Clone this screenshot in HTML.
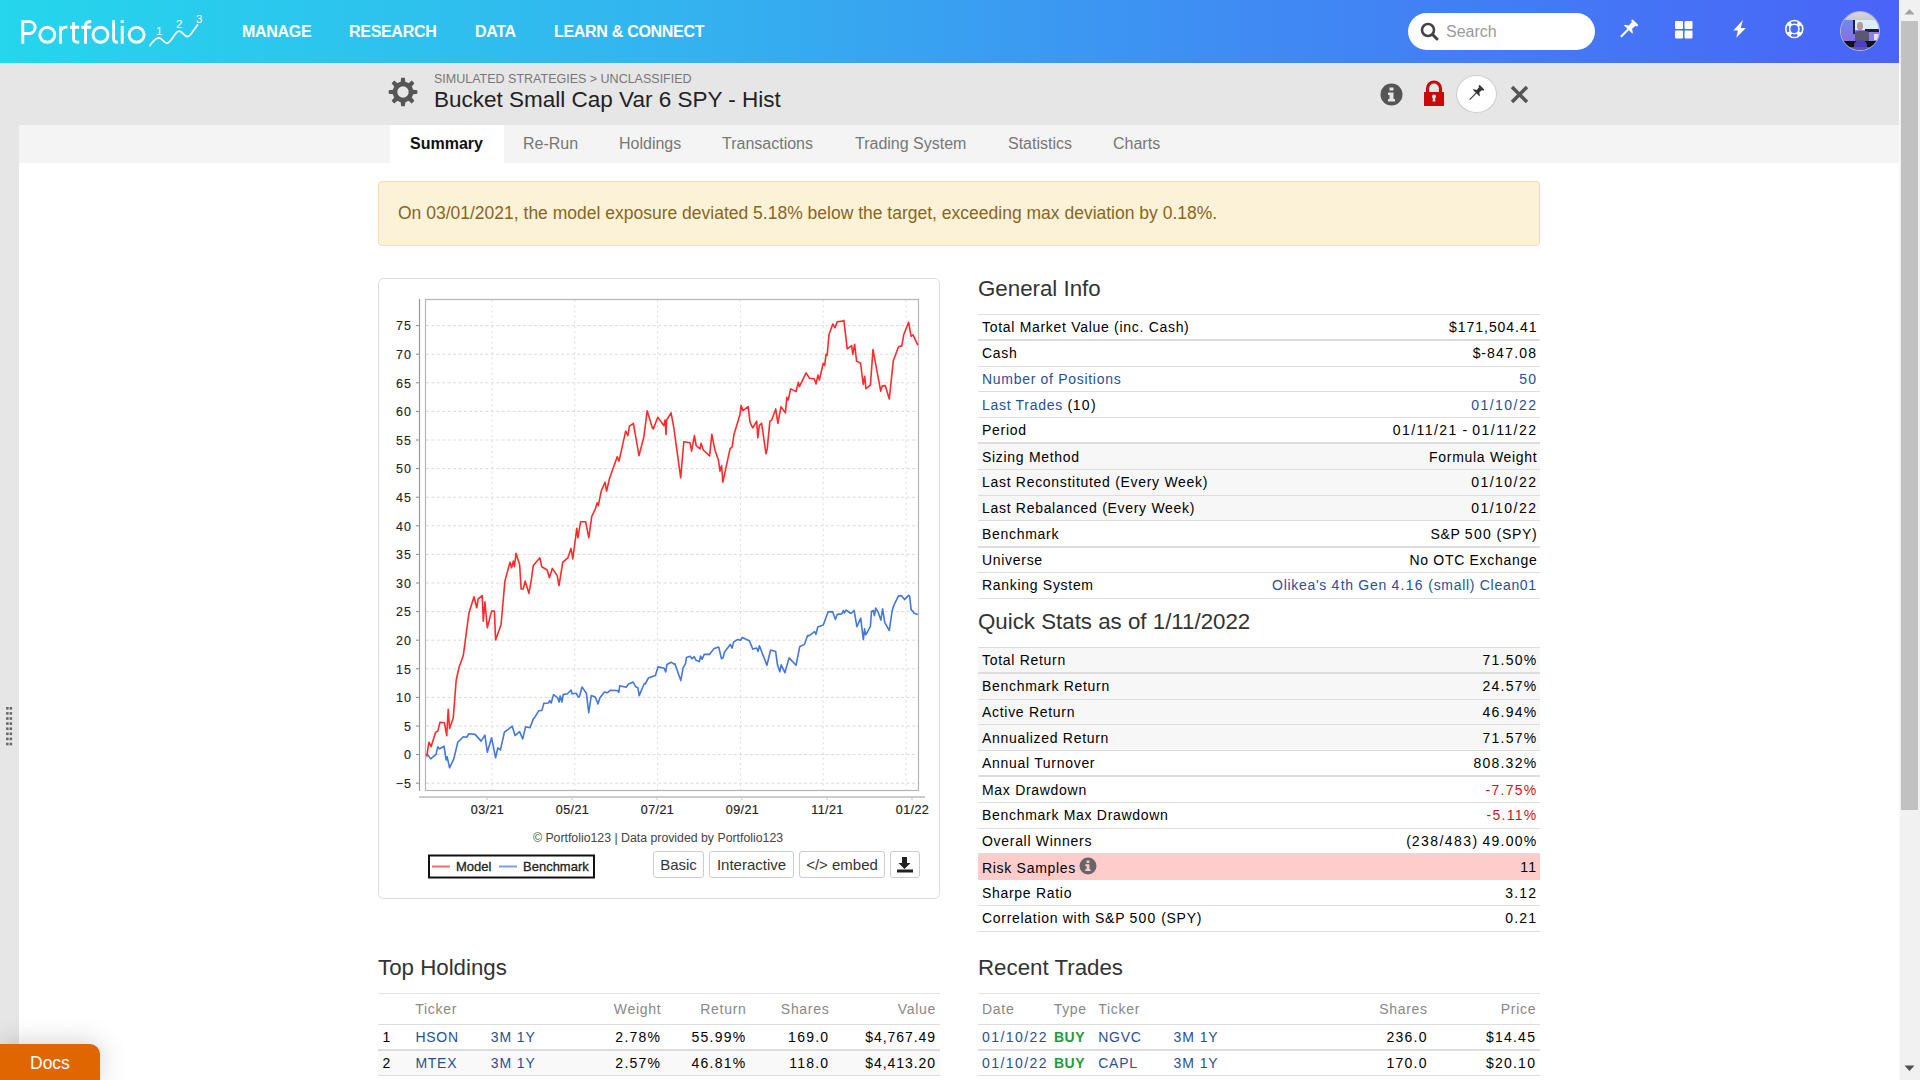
<!DOCTYPE html><html><head><meta charset="utf-8"><style>
*{box-sizing:border-box;margin:0;padding:0}
html,body{width:1920px;height:1080px;overflow:hidden}
body{background:#e6e6e6;font-family:"Liberation Sans",sans-serif;position:relative}
.a{position:absolute}
#nav{left:0;top:0;width:1899px;height:63px;background:linear-gradient(90deg,#25d6ec 0%,#33b4ef 35%,#3f8cf3 65%,#4964f8 100%)}
.navt{color:#fff;font-weight:700;font-size:16px;top:22px;line-height:20px;letter-spacing:-0.3px}
#search{left:1408px;top:13px;width:187px;height:37px;background:#fff;border-radius:19px}
#search span{position:absolute;left:38px;top:9px;font-size:16px;color:#9a9a9a;line-height:20px}
#content{left:19px;top:163px;width:1880px;height:917px;background:#fff}
#tabbar{left:19px;top:125px;width:1880px;height:38px;background:#f4f4f4}
.tab{top:134px;font-size:16px;color:#777;line-height:20px}
#alert{left:378px;top:181px;width:1162px;height:65px;background:#fcf2d8;border:1px solid #f6dcb0;border-radius:4px}
#alert span{position:absolute;left:19px;top:20px;font-size:17.5px;color:#88661e;line-height:22px}
.h2{font-size:22.3px;color:#333;line-height:26px}
table{border-collapse:collapse;position:absolute;font-size:14px;letter-spacing:0.7px;color:#000}
.tx{position:absolute;font-size:14px;letter-spacing:0.7px;line-height:16px;color:#000;white-space:nowrap}
.tr{text-align:right}
.n{letter-spacing:1.25px}
.d{letter-spacing:1.45px}
.m{letter-spacing:0.95px}
td{height:25.8px;padding:0 2.6px 0 4px;border-top:1px solid #ddd;white-space:nowrap;vertical-align:middle}
td.r{text-align:right}
tr.t td{border-top:2px solid #ddd}
tr.g td{background:#f7f7f7}
.lk{color:#2a4f95}
.neg{color:#c81818}
.btn{position:absolute;top:851px;height:27px;border:1px solid #ccc;border-radius:3px;background:#fff;font-size:15px;color:#333;line-height:25px;text-align:center}
#scroll{left:1899px;top:0;width:21px;height:1080px;background:#f1f1f1;border-left:1px solid #fafafa}
</style></head><body>
<div class="a" id="content"></div>
<div class="a" id="tabbar"></div>
<div class="a" id="nav">
<svg class="a" style="left:0;top:0" width="230" height="63" viewBox="0 0 230 63"><g stroke="#fff" stroke-width="2.9" fill="none"><path d="M22.8,43.7 V21.6 H29.2 A5.95,5.95 0 0 1 29.2,33.5 H22.8"/><circle cx="47.3" cy="34.8" r="7.5"/><path d="M60.4,43.7 V26.2 M60.4,33 C60.4,28.5 63,26.9 67.5,26.9"/><path d="M73.5,22.2 V39 C73.5,41.5 75,42.3 79.2,42.3 M70,27.3 H79.2"/><path d="M85.5,43.7 V26 C85.5,22.5 87.5,21.5 91.2,21.5 M81.4,27.3 H91.2"/><circle cx="100.5" cy="34.8" r="7.5"/><path d="M113.6,20.2 V39 C113.6,41.5 115,42.3 117.8,42.3"/><path d="M122.2,25.9 V43.7"/><circle cx="136.6" cy="34.8" r="7.5"/></g><rect x="120.75" y="20.2" width="2.9" height="2.8" fill="#fff"/><path d="M150,45.5 C153,41 156,37.8 159,37.8 C162,37.8 164,43.3 167,43.3 C171,43.3 175,31.2 179,31.2 C182.5,31.2 184.5,36.7 187.5,36.7 C190.5,36.7 194,29 197.5,25" stroke="#fff" stroke-width="1.7" fill="none" stroke-linecap="round"/><text x="156" y="34.5" font-family="Liberation Sans" font-size="11.5" fill="#fff">1</text><text x="176" y="28" font-family="Liberation Sans" font-size="11.5" fill="#fff">2</text><text x="196" y="22.5" font-family="Liberation Sans" font-size="11.5" fill="#fff">3</text></svg>
<div class="a navt" style="left:242px">MANAGE</div>
<div class="a navt" style="left:349px">RESEARCH</div>
<div class="a navt" style="left:475px">DATA</div>
<div class="a navt" style="left:554px">LEARN &amp; CONNECT</div>
<div class="a" id="search"><svg class="a" style="left:12px;top:9px" width="20" height="20" viewBox="0 0 20 20"><circle cx="8" cy="8" r="6" stroke="#444" stroke-width="2.6" fill="none"/><path d="M12.5,12.5 L17,17" stroke="#444" stroke-width="3" stroke-linecap="round"/></svg><span>Search</span></div>
<svg class="a" style="left:1614px;top:14px" width="40" height="30" viewBox="0 0 40 30"><g transform="translate(21.4,8.2) rotate(45)" fill="#fff"><rect x="-4.2" y="0" width="8.4" height="2.2" rx="0.8"/><path d="M-2.7,2 H2.7 L2.3,7 L5.8,9.4 V10.3 H-5.8 V9.4 L-2.3,7 Z"/><rect x="-1" y="10" width="2" height="10.5"/></g></svg>
<svg class="a" style="left:1674px;top:20px" width="20" height="20" viewBox="0 0 20 20"><rect x="1" y="1" width="8" height="8" rx="1" fill="#fff"/><rect x="10.5" y="1" width="8" height="8" rx="1" fill="#fff"/><rect x="1" y="10.5" width="8" height="8" rx="1" fill="#fff"/><rect x="10.5" y="10.5" width="8" height="8" rx="1" fill="#fff"/></svg>
<svg class="a" style="left:1724px;top:14px" width="30" height="30" viewBox="0 0 30 30"><path d="M18.9,6 L9.3,16.5 L13.9,16.5 L12.3,23.8 L21.9,13.9 L16.7,13.9 Z" fill="#fff"/></svg>
<svg class="a" style="left:1784px;top:19px" width="21" height="21" viewBox="0 0 21 21"><mask id="lbm"><rect width="21" height="21" fill="#000"/><circle cx="10.3" cy="10" r="9.3" fill="#fff"/><circle cx="10.3" cy="10" r="3.9" fill="#000"/><path d="M7.30,4.12 A6.6,6.6 0 0 1 13.30,4.12 M16.18,7.00 A6.6,6.6 0 0 1 16.18,13.00 M13.30,15.88 A6.6,6.6 0 0 1 7.30,15.88 M4.42,13.00 A6.6,6.6 0 0 1 4.42,7.00" stroke="#000" stroke-width="2.3" fill="none"/></mask><rect width="21" height="21" fill="#fff" mask="url(#lbm)"/></svg>
<div class="a" style="left:1840px;top:11px;width:40px;height:40px;border-radius:50%;overflow:hidden;border:1px solid #b8b8c0;background:#7d78ea"><div class="a" style="left:0;top:0;width:40px;height:8px;background:linear-gradient(180deg,#d8d8e0,#c8c8d0)"></div><div class="a" style="left:0;top:8px;width:13px;height:22px;background:linear-gradient(180deg,#7088f0,#8a6ee0)"></div><div class="a" style="left:14px;top:8px;width:26px;height:10px;background:#dcedf6"></div><div class="a" style="left:24px;top:17px;width:16px;height:3px;background:#1c1c3a"></div><div class="a" style="left:24px;top:20px;width:16px;height:12px;background:#8c80e2"></div><div class="a" style="left:33px;top:22px;width:5px;height:6px;background:#e8e0f0"></div><div class="a" style="left:12px;top:8px;width:2px;height:14px;background:#1a2050"></div><div class="a" style="left:14px;top:19px;width:14px;height:12px;background:#5a5870;border-radius:3px 3px 0 0"></div><div class="a" style="left:16px;top:10px;width:6px;height:8px;background:#b89a90;border-radius:45%"></div><div class="a" style="left:0;top:29px;width:40px;height:6px;background:#101018"></div><div class="a" style="left:13px;top:28px;width:13px;height:10px;background:#4a40c0;border-radius:50% 50% 0 0"></div><div class="a" style="left:0;top:35px;width:40px;height:5px;background:#6050c0"></div></div>
</div>
<svg class="a" style="left:382px;top:72px" width="42" height="40" viewBox="0 0 42 40"><mask id="gm"><rect width="42" height="40" fill="#000"/><circle cx="21.0" cy="20.0" r="10.4" fill="#fff"/><polygon points="29.50,22.60 35.30,21.80 35.30,18.20 29.50,17.40" fill="#fff"/><polygon points="25.17,27.85 29.84,31.38 32.38,28.84 28.85,24.17" fill="#fff"/><polygon points="18.40,28.50 19.20,34.30 22.80,34.30 23.60,28.50" fill="#fff"/><polygon points="13.15,24.17 9.62,28.84 12.16,31.38 16.83,27.85" fill="#fff"/><polygon points="12.50,17.40 6.70,18.20 6.70,21.80 12.50,22.60" fill="#fff"/><polygon points="16.83,12.15 12.16,8.62 9.62,11.16 13.15,15.83" fill="#fff"/><polygon points="23.60,11.50 22.80,5.70 19.20,5.70 18.40,11.50" fill="#fff"/><polygon points="28.85,15.83 32.38,11.16 29.84,8.62 25.17,12.15" fill="#fff"/><circle cx="21.0" cy="20.0" r="5.7" fill="#000"/></mask><rect width="42" height="40" fill="#555" mask="url(#gm)"/></svg>
<div class="a" style="left:434px;top:72px;font-size:12.5px;color:#777;line-height:14px">SIMULATED STRATEGIES &gt; UNCLASSIFIED</div>
<div class="a" style="left:434px;top:87px;font-size:22.5px;color:#222;line-height:26px">Bucket Small Cap Var 6 SPY - Hist</div>
<svg class="a" style="left:1380px;top:83px" width="24" height="24" viewBox="0 0 24 24"><circle cx="11.5" cy="11.5" r="11" fill="#555"/><rect x="9.5" y="4.5" width="4" height="3" fill="#e6e6e6"/><path d="M8,9.5 H13.5 V16 H15 V18.5 H8 V16 H9.5 V12 H8 Z" fill="#e6e6e6"/></svg>
<svg class="a" style="left:1423px;top:80px" width="22" height="27" viewBox="0 0 22 27"><path d="M4.5,12.5 V8.5 A6.5,6.5 0 0 1 17.5,8.5 V12.5" stroke="#c80a0a" stroke-width="3.2" fill="none"/><rect x="1" y="12" width="20" height="14" fill="#c80a0a"/><circle cx="11" cy="16.6" r="2" fill="#e6e6e6"/><path d="M10,17 H12 L12.4,21.5 H9.6 Z" fill="#e6e6e6"/></svg>
<div class="a" style="left:1456px;top:75px;width:41px;height:38px;border-radius:50%;background:#fff;border:1px solid #ccc"></div>
<svg class="a" style="left:1456px;top:75px" width="41" height="38" viewBox="0 0 41 38"><g transform="translate(26.0,12.2) rotate(45)" fill="#333"><rect x="-3.4" y="0" width="6.8" height="1.8" rx="0.6"/><path d="M-2.1,1.6 H2.1 L1.8,5.6 L4.6,7.6 V8.3 H-4.6 V7.6 L-1.8,5.6 Z"/><rect x="-0.55" y="8" width="1.1" height="9.5"/></g></svg>
<svg class="a" style="left:1510px;top:85px" width="19" height="19" viewBox="0 0 19 19"><path d="M2,2 L17,17 M17,2 L2,17" stroke="#555" stroke-width="3.5"/></svg>
<div class="a" style="left:390px;top:125px;width:114px;height:38px;background:#fff"></div>
<div class="a tab" style="left:410px;color:#111;font-weight:700">Summary</div>
<div class="a tab" style="left:523px">Re-Run</div>
<div class="a tab" style="left:619px">Holdings</div>
<div class="a tab" style="left:722px">Transactions</div>
<div class="a tab" style="left:855px">Trading System</div>
<div class="a tab" style="left:1008px">Statistics</div>
<div class="a tab" style="left:1113px">Charts</div>
<div class="a" id="alert"><span>On 03/01/2021, the model exposure deviated 5.18% below the target, exceeding max deviation by 0.18%.</span></div>
<svg class="a" style="left:0;top:0" width="1920" height="1080" viewBox="0 0 1920 1080"><rect x="378.5" y="278.5" width="561" height="620" rx="5" fill="#fff" stroke="#dcdcdc"/><line x1="426" y1="783.2" x2="918" y2="783.2" stroke="#dadada" stroke-width="1" stroke-dasharray="3 2.4"/><line x1="416" y1="783.2" x2="420" y2="783.2" stroke="#888" stroke-width="1"/><text x="412" y="788.0" font-family="Liberation Sans" font-size="12.5" letter-spacing="1" fill="#222" text-anchor="end" stroke="#222" stroke-width="0.12">&#8722;5</text><line x1="426" y1="754.6" x2="918" y2="754.6" stroke="#dadada" stroke-width="1" stroke-dasharray="3 2.4"/><line x1="416" y1="754.6" x2="420" y2="754.6" stroke="#888" stroke-width="1"/><text x="412" y="759.4" font-family="Liberation Sans" font-size="12.5" letter-spacing="1" fill="#222" text-anchor="end" stroke="#222" stroke-width="0.12">0</text><line x1="426" y1="726.0" x2="918" y2="726.0" stroke="#dadada" stroke-width="1" stroke-dasharray="3 2.4"/><line x1="416" y1="726.0" x2="420" y2="726.0" stroke="#888" stroke-width="1"/><text x="412" y="730.8" font-family="Liberation Sans" font-size="12.5" letter-spacing="1" fill="#222" text-anchor="end" stroke="#222" stroke-width="0.12">5</text><line x1="426" y1="697.4" x2="918" y2="697.4" stroke="#dadada" stroke-width="1" stroke-dasharray="3 2.4"/><line x1="416" y1="697.4" x2="420" y2="697.4" stroke="#888" stroke-width="1"/><text x="412" y="702.2" font-family="Liberation Sans" font-size="12.5" letter-spacing="1" fill="#222" text-anchor="end" stroke="#222" stroke-width="0.12">10</text><line x1="426" y1="668.8" x2="918" y2="668.8" stroke="#dadada" stroke-width="1" stroke-dasharray="3 2.4"/><line x1="416" y1="668.8" x2="420" y2="668.8" stroke="#888" stroke-width="1"/><text x="412" y="673.6" font-family="Liberation Sans" font-size="12.5" letter-spacing="1" fill="#222" text-anchor="end" stroke="#222" stroke-width="0.12">15</text><line x1="426" y1="640.2" x2="918" y2="640.2" stroke="#dadada" stroke-width="1" stroke-dasharray="3 2.4"/><line x1="416" y1="640.2" x2="420" y2="640.2" stroke="#888" stroke-width="1"/><text x="412" y="645.0" font-family="Liberation Sans" font-size="12.5" letter-spacing="1" fill="#222" text-anchor="end" stroke="#222" stroke-width="0.12">20</text><line x1="426" y1="611.6" x2="918" y2="611.6" stroke="#dadada" stroke-width="1" stroke-dasharray="3 2.4"/><line x1="416" y1="611.6" x2="420" y2="611.6" stroke="#888" stroke-width="1"/><text x="412" y="616.4" font-family="Liberation Sans" font-size="12.5" letter-spacing="1" fill="#222" text-anchor="end" stroke="#222" stroke-width="0.12">25</text><line x1="426" y1="583.0" x2="918" y2="583.0" stroke="#dadada" stroke-width="1" stroke-dasharray="3 2.4"/><line x1="416" y1="583.0" x2="420" y2="583.0" stroke="#888" stroke-width="1"/><text x="412" y="587.8" font-family="Liberation Sans" font-size="12.5" letter-spacing="1" fill="#222" text-anchor="end" stroke="#222" stroke-width="0.12">30</text><line x1="426" y1="554.4" x2="918" y2="554.4" stroke="#dadada" stroke-width="1" stroke-dasharray="3 2.4"/><line x1="416" y1="554.4" x2="420" y2="554.4" stroke="#888" stroke-width="1"/><text x="412" y="559.2" font-family="Liberation Sans" font-size="12.5" letter-spacing="1" fill="#222" text-anchor="end" stroke="#222" stroke-width="0.12">35</text><line x1="426" y1="525.8" x2="918" y2="525.8" stroke="#dadada" stroke-width="1" stroke-dasharray="3 2.4"/><line x1="416" y1="525.8" x2="420" y2="525.8" stroke="#888" stroke-width="1"/><text x="412" y="530.6" font-family="Liberation Sans" font-size="12.5" letter-spacing="1" fill="#222" text-anchor="end" stroke="#222" stroke-width="0.12">40</text><line x1="426" y1="497.2" x2="918" y2="497.2" stroke="#dadada" stroke-width="1" stroke-dasharray="3 2.4"/><line x1="416" y1="497.2" x2="420" y2="497.2" stroke="#888" stroke-width="1"/><text x="412" y="502.0" font-family="Liberation Sans" font-size="12.5" letter-spacing="1" fill="#222" text-anchor="end" stroke="#222" stroke-width="0.12">45</text><line x1="426" y1="468.6" x2="918" y2="468.6" stroke="#dadada" stroke-width="1" stroke-dasharray="3 2.4"/><line x1="416" y1="468.6" x2="420" y2="468.6" stroke="#888" stroke-width="1"/><text x="412" y="473.4" font-family="Liberation Sans" font-size="12.5" letter-spacing="1" fill="#222" text-anchor="end" stroke="#222" stroke-width="0.12">50</text><line x1="426" y1="440.0" x2="918" y2="440.0" stroke="#dadada" stroke-width="1" stroke-dasharray="3 2.4"/><line x1="416" y1="440.0" x2="420" y2="440.0" stroke="#888" stroke-width="1"/><text x="412" y="444.8" font-family="Liberation Sans" font-size="12.5" letter-spacing="1" fill="#222" text-anchor="end" stroke="#222" stroke-width="0.12">55</text><line x1="426" y1="411.4" x2="918" y2="411.4" stroke="#dadada" stroke-width="1" stroke-dasharray="3 2.4"/><line x1="416" y1="411.4" x2="420" y2="411.4" stroke="#888" stroke-width="1"/><text x="412" y="416.2" font-family="Liberation Sans" font-size="12.5" letter-spacing="1" fill="#222" text-anchor="end" stroke="#222" stroke-width="0.12">60</text><line x1="426" y1="382.8" x2="918" y2="382.8" stroke="#dadada" stroke-width="1" stroke-dasharray="3 2.4"/><line x1="416" y1="382.8" x2="420" y2="382.8" stroke="#888" stroke-width="1"/><text x="412" y="387.6" font-family="Liberation Sans" font-size="12.5" letter-spacing="1" fill="#222" text-anchor="end" stroke="#222" stroke-width="0.12">65</text><line x1="426" y1="354.2" x2="918" y2="354.2" stroke="#dadada" stroke-width="1" stroke-dasharray="3 2.4"/><line x1="416" y1="354.2" x2="420" y2="354.2" stroke="#888" stroke-width="1"/><text x="412" y="359.0" font-family="Liberation Sans" font-size="12.5" letter-spacing="1" fill="#222" text-anchor="end" stroke="#222" stroke-width="0.12">70</text><line x1="426" y1="325.6" x2="918" y2="325.6" stroke="#dadada" stroke-width="1" stroke-dasharray="3 2.4"/><line x1="416" y1="325.6" x2="420" y2="325.6" stroke="#888" stroke-width="1"/><text x="412" y="330.4" font-family="Liberation Sans" font-size="12.5" letter-spacing="1" fill="#222" text-anchor="end" stroke="#222" stroke-width="0.12">75</text><line x1="492.0" y1="300" x2="492.0" y2="790" stroke="#dedede" stroke-width="1" stroke-dasharray="2.2 3"/><line x1="574.8" y1="300" x2="574.8" y2="790" stroke="#dedede" stroke-width="1" stroke-dasharray="2.2 3"/><line x1="657.6" y1="300" x2="657.6" y2="790" stroke="#dedede" stroke-width="1" stroke-dasharray="2.2 3"/><line x1="740.4" y1="300" x2="740.4" y2="790" stroke="#dedede" stroke-width="1" stroke-dasharray="2.2 3"/><line x1="823.2" y1="300" x2="823.2" y2="790" stroke="#dedede" stroke-width="1" stroke-dasharray="2.2 3"/><line x1="906.0" y1="300" x2="906.0" y2="790" stroke="#dedede" stroke-width="1" stroke-dasharray="2.2 3"/><rect x="425.5" y="299.5" width="493" height="491" fill="none" stroke="#b4b4b4" stroke-width="1.2"/><line x1="419.5" y1="299" x2="419.5" y2="791" stroke="#999" stroke-width="1.2"/><line x1="419" y1="797" x2="925" y2="797" stroke="#bbb" stroke-width="1.5"/><line x1="487" y1="797" x2="487" y2="800" stroke="#c4c4c4"/><text x="487.5" y="814" font-family="Liberation Sans" font-size="12.5" letter-spacing="0.4" fill="#222" text-anchor="middle" stroke="#222" stroke-width="0.2">03/21</text><line x1="572" y1="797" x2="572" y2="800" stroke="#c4c4c4"/><text x="572.5" y="814" font-family="Liberation Sans" font-size="12.5" letter-spacing="0.4" fill="#222" text-anchor="middle" stroke="#222" stroke-width="0.2">05/21</text><line x1="657" y1="797" x2="657" y2="800" stroke="#c4c4c4"/><text x="657.5" y="814" font-family="Liberation Sans" font-size="12.5" letter-spacing="0.4" fill="#222" text-anchor="middle" stroke="#222" stroke-width="0.2">07/21</text><line x1="742" y1="797" x2="742" y2="800" stroke="#c4c4c4"/><text x="742.5" y="814" font-family="Liberation Sans" font-size="12.5" letter-spacing="0.4" fill="#222" text-anchor="middle" stroke="#222" stroke-width="0.2">09/21</text><line x1="827" y1="797" x2="827" y2="800" stroke="#c4c4c4"/><text x="827.5" y="814" font-family="Liberation Sans" font-size="12.5" letter-spacing="0.4" fill="#222" text-anchor="middle" stroke="#222" stroke-width="0.2">11/21</text><line x1="912" y1="797" x2="912" y2="800" stroke="#c4c4c4"/><text x="912.5" y="814" font-family="Liberation Sans" font-size="12.5" letter-spacing="0.4" fill="#222" text-anchor="middle" stroke="#222" stroke-width="0.2">01/22</text><polyline points="425.6,754.4 428.4,755.6 430.7,758.9 436.0,754.4 437.8,746.7 439.6,748.9 444.0,746.2 446.2,760.0 447.1,756.7 449.6,767.8 453.8,758.9 457.8,742.2 463.3,736.7 466.7,737.3 468.9,733.8 475.1,734.4 481.1,741.1 484.9,735.1 487.3,752.2 491.6,737.8 495.6,757.8 497.8,747.8 500.4,750.0 504.4,732.2 512.2,726.2 515.1,735.6 519.6,731.6 522.7,738.9 525.6,726.7 530.0,727.8 533.3,718.9 535.0,716.9 538.7,710.8 541.9,710.4 543.8,703.4 548.4,703.0 549.8,700.6 551.2,703.0 553.5,694.6 557.7,697.9 559.1,702.0 560.2,696.0 561.9,702.0 563.2,694.6 567.4,693.7 571.1,690.0 572.0,693.7 576.2,693.2 578.1,696.9 579.4,696.7 582.0,687.0 586.4,693.2 588.7,712.7 591.3,695.6 595.2,696.9 598.0,703.9 599.8,697.9 604.4,691.9 607.2,692.8 610.5,690.2 617.4,690.5 618.8,692.3 619.7,685.8 626.2,687.2 628.5,684.0 633.1,682.1 635.9,686.8 637.8,687.7 639.2,695.6 644.3,683.5 645.2,684.0 648.4,678.0 655.4,675.6 658.0,666.9 664.2,668.2 665.7,671.9 666.9,664.5 671.1,662.2 673.9,664.1 674.8,663.6 680.8,680.6 683.1,667.8 685.5,663.6 686.4,657.6 690.1,656.2 691.9,658.8 694.2,656.7 696.0,660.2 699.3,661.6 700.6,656.0 702.0,659.3 704.4,654.2 709.4,654.4 714.1,648.6 718.7,647.0 721.5,658.8 723.1,657.9 724.4,652.3 730.3,644.4 732.1,648.1 733.5,642.1 737.7,639.4 740.5,640.3 742.3,637.5 749.3,640.7 752.8,649.1 756.7,648.1 758.1,651.4 759.4,645.8 766.9,665.3 770.6,650.0 775.6,651.4 777.5,664.8 779.8,671.8 781.2,664.8 784.9,672.7 789.1,657.9 796.0,665.3 799.7,646.8 804.4,644.4 807.6,635.6 809.4,635.6 814.5,631.5 815.9,634.3 817.8,626.9 823.3,625.0 828.0,611.9 832.6,611.6 835.4,619.4 837.2,614.4 841.9,613.9 843.3,610.5 844.4,613.0 845.9,610.0 851.1,613.5 854.1,610.4 856.9,626.7 860.7,618.1 863.3,639.6 864.6,628.9 865.6,634.8 866.7,633.3 870.4,626.3 871.5,611.5 873.3,610.5 874.4,615.7 875.7,608.1 878.1,612.0 880.9,620.1 882.6,608.9 884.8,622.6 889.3,630.5 892.2,610.4 893.7,605.6 898.5,595.9 901.5,595.7 904.6,599.6 908.5,595.4 909.6,595.9 911.1,609.6 913.3,611.9 914.1,613.3 917.8,614.4" fill="none" stroke="#4477dd" stroke-width="1.6" stroke-linejoin="round"/><polyline points="426.7,756.7 428.9,742.2 431.1,746.7 435.6,732.2 437.8,731.1 440.0,722.2 444.4,722.7 446.7,735.6 448.2,709.3 449.6,728.4 453.3,717.8 456.2,680.0 458.9,667.8 463.3,655.6 465.1,642.2 468.9,613.3 474.0,596.7 476.7,607.8 478.2,598.9 482.2,595.6 483.3,621.1 484.9,601.8 487.3,627.8 491.6,611.1 494.4,611.1 495.6,640.0 501.1,624.4 504.9,581.1 510.0,562.2 511.6,567.8 513.3,561.1 514.4,566.7 516.0,553.3 519.6,564.4 521.1,588.9 523.3,588.9 525.1,581.1 528.9,593.3 531.1,581.1 533.3,565.6 539.9,557.8 541.7,566.7 547.2,570.0 549.4,577.8 552.3,568.4 557.2,575.6 559.0,585.6 562.8,562.2 567.9,557.8 571.0,548.4 572.8,558.9 576.8,528.4 577.9,537.8 580.6,521.8 585.7,521.8 588.8,537.8 591.7,516.7 595.4,508.9 597.2,502.7 598.3,505.6 601.2,491.1 605.0,482.2 606.6,491.1 609.4,478.9 617.2,456.7 619.0,461.1 625.7,431.1 627.9,435.6 629.4,426.2 633.4,423.3 639.0,455.6 643.9,436.7 647.2,410.7 652.3,427.8 653.3,428.9 657.8,417.3 663.8,425.6 665.1,420.0 666.0,434.4 666.7,420.0 671.1,412.9 674.0,428.9 680.7,477.8 683.8,441.8 690.0,442.7 691.6,451.1 694.4,435.6 696.2,445.6 700.0,448.9 701.1,443.3 703.3,450.0 709.6,456.0 711.8,434.4 714.9,450.0 718.4,460.0 720.0,471.1 721.6,465.6 722.9,482.2 730.0,448.9 732.2,446.7 734.0,434.4 740.0,414.4 741.1,405.6 742.9,410.7 748.2,406.7 750.0,422.2 752.7,427.8 756.7,421.1 757.8,437.8 759.3,425.6 761.6,423.3 766.0,453.8 767.2,448.9 769.9,421.1 771.7,420.0 775.7,408.9 777.9,423.3 781.0,406.7 785.4,412.9 786.8,397.3 788.3,400.0 790.6,388.9 796.1,391.6 798.3,382.2 799.4,386.7 806.1,372.9 809.4,378.2 814.3,378.9 816.1,384.0 817.9,375.1 819.4,380.0 823.2,363.3 824.6,365.6 826.1,354.4 827.2,355.1 829.0,334.4 832.8,324.0 835.0,327.8 837.2,321.8 842.8,321.1 843.9,320.4 847.2,348.9 851.7,345.6 852.8,354.4 854.6,344.4 856.6,361.1 860.6,363.3 863.2,384.4 864.7,376.3 865.9,388.6 870.4,385.2 873.0,349.6 880.7,391.1 882.2,385.9 885.2,385.6 889.3,399.0 893.3,360.7 898.5,346.7 901.8,345.9 903.7,334.8 908.6,322.2 911.1,336.3 913.0,334.8 917.8,345.2" fill="none" stroke="#ff2b2b" stroke-width="1.6" stroke-linejoin="round"/><text x="658" y="842" font-family="Liberation Sans" font-size="12.3" fill="#444" text-anchor="middle">&#169; Portfolio123 | Data provided by Portfolio123</text><rect x="429" y="855.5" width="165" height="22" fill="#fff" stroke="#111" stroke-width="2"/><line x1="432" y1="866.5" x2="450" y2="866.5" stroke="#ff6a6a" stroke-width="2"/><text x="456" y="871" font-family="Liberation Sans" font-size="13" fill="#222" stroke="#222" stroke-width="0.3">Model</text><line x1="499" y1="866.5" x2="517" y2="866.5" stroke="#7a9ee6" stroke-width="2"/><text x="523" y="871" font-family="Liberation Sans" font-size="13" fill="#222" stroke="#222" stroke-width="0.3">Benchmark</text></svg>
<div class="btn" style="left:653px;width:51px">Basic</div>
<div class="btn" style="left:709px;width:85px">Interactive</div>
<div class="btn" style="left:799px;width:86px">&lt;/&gt; embed</div>
<div class="btn" style="left:890px;width:30px"><svg style="position:absolute;left:5px;top:5px" width="18" height="16" viewBox="0 0 18 16"><path d="M6,0 H11 V6 H14.5 L8.5,12 L2.5,6 H6 Z" fill="#222"/><rect x="1" y="12.5" width="16" height="3" fill="#222"/></svg></div>
<div class="a h2" style="left:978px;top:276px">General Info</div>
<table style="left:978px;top:314px;width:562px;border-bottom:1px solid #ddd"><tr class="" style=""><td>Total Market Value (inc. Cash)</td><td class="r"><span class="m">$171,504.41</span></td></tr><tr class="t" style=""><td>Cash</td><td class="r">$<span class="n">-847.08</span></td></tr><tr class="" style=""><td><span class="lk">Number of Positions</span></td><td class="r"><span class="lk"><span class="n">50</span></span></td></tr><tr class="" style=""><td><span class="lk">Last Trades</span> (<span class="n">10</span>)</td><td class="r"><span class="lk"><span class="d">01/10/22</span></span></td></tr><tr class="" style=""><td>Period</td><td class="r"><span class="d">01/11/21</span> - <span class="d">01/11/22</span></td></tr><tr class="t g" style=""><td>Sizing Method</td><td class="r">Formula Weight</td></tr><tr class="g" style=""><td>Last Reconstituted (Every Week)</td><td class="r"><span class="d">01/10/22</span></td></tr><tr class="g" style=""><td>Last Rebalanced (Every Week)</td><td class="r"><span class="d">01/10/22</span></td></tr><tr class="" style=""><td>Benchmark</td><td class="r">S&amp;P <span class="n">500</span> (SPY)</td></tr><tr class="t" style=""><td>Universe</td><td class="r">No OTC Exchange</td></tr><tr class="" style=""><td>Ranking System</td><td class="r"><span class="lk">Olikea's <span class="n">4</span>th Gen <span class="n">4.16</span> (small) Clean0<span class="n">1</span></span></td></tr></table>
<div class="a h2" style="left:978px;top:609px">Quick Stats as of 1/11/2022</div>
<table style="left:978px;top:647px;width:562px;border-bottom:1px solid #ddd"><tr class="g"><td>Total Return</td><td class="r"><span class="n">71.50%</span></td></tr><tr class="t g"><td>Benchmark Return</td><td class="r"><span class="n">24.57%</span></td></tr><tr class="g"><td>Active Return</td><td class="r"><span class="n">46.94%</span></td></tr><tr class="g"><td>Annualized Return</td><td class="r"><span class="n">71.57%</span></td></tr><tr class=""><td>Annual Turnover</td><td class="r"><span class="n">808.32%</span></td></tr><tr class="t"><td>Max Drawdown</td><td class="r"><span class="neg"><span class="n">-7.75%</span></span></td></tr><tr class=""><td>Benchmark Max Drawdown</td><td class="r"><span class="neg"><span class="n">-5.11%</span></span></td></tr><tr class=""><td>Overall Winners</td><td class="r">(<span class="d">238/483</span>) <span class="n">49.00%</span></td></tr><tr class=""><td style="background:#ffcccc">Risk Samples <svg style="vertical-align:-3px;margin-left:-1.5px;position:relative;top:-1px" width="18" height="18" viewBox="0 0 18 18"><circle cx="9" cy="9" r="8.5" fill="#666"/><rect x="7.6" y="3.5" width="2.8" height="2.4" fill="#fcc"/><path d="M6.3,7.3 H10.4 V12.3 H11.6 V14 H6.3 V12.3 H7.6 V9 H6.3 Z" fill="#fcc"/></svg></td><td class="r" style="background:#ffcccc"><span class="n">11</span></td></tr><tr class=""><td style="border-top-color:#ffcccc">Sharpe Ratio</td><td class="r" style="border-top-color:#ffcccc"><span class="n">3.12</span></td></tr><tr class=""><td>Correlation with S&amp;P <span class="n">500</span> (SPY)</td><td class="r"><span class="n">0.21</span></td></tr></table>
<div class="a h2" style="left:378px;top:955px">Top Holdings</div>
<div class="a h2" style="left:978px;top:955px">Recent Trades</div>
<div class="a" style="left:378px;top:993px;width:562px;height:1px;background:#e4e4e4"></div><div class="a" style="left:378px;top:1024px;width:562px;height:1px;background:#ddd"></div><div class="a" style="left:378px;top:1049px;width:562px;height:2px;background:#ddd"></div><div class="a" style="left:378px;top:1051px;width:562px;height:24px;background:#f9f9f9"></div><div class="a" style="left:378px;top:1075px;width:562px;height:1px;background:#ddd"></div><div class="tx " style="left:415.3px;top:1000.9px;color:#888;">Ticker</div><div class="tx " style="right:1258.7px;top:1000.9px;color:#888;">Weight</div><div class="tx " style="right:1173.5px;top:1000.9px;color:#888;">Return</div><div class="tx " style="right:1090.6px;top:1000.9px;color:#888;">Shares</div><div class="tx " style="right:984.0px;top:1000.9px;color:#888;">Value</div><div class="tx n" style="left:382.5px;top:1029.1px;color:#000;">1</div><div class="tx " style="left:415.5px;top:1029.1px;color:#2a4f95;">HSON</div><div class="tx " style="left:490.8px;top:1029.1px;color:#2a4f95;letter-spacing:0.9px">3M 1Y</div><div class="tx n" style="right:1258.7px;top:1029.1px;color:#000;">2.78%</div><div class="tx n" style="right:1173.5px;top:1029.1px;color:#000;">55.99%</div><div class="tx n" style="right:1090.6px;top:1029.1px;color:#000;">169.0</div><div class="tx m" style="right:984.0px;top:1029.1px;color:#000;">$4,767.49</div><div class="tx n" style="left:382.5px;top:1055.1px;color:#000;">2</div><div class="tx " style="left:415.5px;top:1055.1px;color:#2a4f95;">MTEX</div><div class="tx " style="left:490.8px;top:1055.1px;color:#2a4f95;letter-spacing:0.9px">3M 1Y</div><div class="tx n" style="right:1258.7px;top:1055.1px;color:#000;">2.57%</div><div class="tx n" style="right:1173.5px;top:1055.1px;color:#000;">46.81%</div><div class="tx n" style="right:1090.6px;top:1055.1px;color:#000;">118.0</div><div class="tx m" style="right:984.0px;top:1055.1px;color:#000;">$4,413.20</div><div class="a" style="left:978px;top:993px;width:562px;height:1px;background:#e4e4e4"></div><div class="a" style="left:978px;top:1024px;width:562px;height:1px;background:#ddd"></div><div class="a" style="left:978px;top:1049px;width:562px;height:2px;background:#ddd"></div><div class="a" style="left:978px;top:1075px;width:562px;height:1px;background:#ddd"></div><div class="tx " style="left:982px;top:1000.9px;color:#888;">Date</div><div class="tx " style="left:1053.7px;top:1000.9px;color:#888;">Type</div><div class="tx " style="left:1098.3px;top:1000.9px;color:#888;">Ticker</div><div class="tx " style="right:492.3px;top:1000.9px;color:#888;">Shares</div><div class="tx " style="right:383.8px;top:1000.9px;color:#888;">Price</div><div class="tx d" style="left:982px;top:1029.1px;color:#2a4f95;">01/10/22</div><div class="tx " style="left:1054px;top:1029.1px;color:#1e9e3a;font-weight:700;letter-spacing:0.5px">BUY</div><div class="tx " style="left:1098.3px;top:1029.1px;color:#2a4f95;">NGVC</div><div class="tx " style="left:1173.6px;top:1029.1px;color:#2a4f95;letter-spacing:0.9px">3M 1Y</div><div class="tx n" style="right:492.3px;top:1029.1px;color:#000;">236.0</div><div class="tx n" style="right:383.8px;top:1029.1px;color:#000;">$14.45</div><div class="tx d" style="left:982px;top:1055.1px;color:#2a4f95;">01/10/22</div><div class="tx " style="left:1054px;top:1055.1px;color:#1e9e3a;font-weight:700;letter-spacing:0.5px">BUY</div><div class="tx " style="left:1098.3px;top:1055.1px;color:#2a4f95;">CAPL</div><div class="tx " style="left:1173.6px;top:1055.1px;color:#2a4f95;letter-spacing:0.9px">3M 1Y</div><div class="tx n" style="right:492.3px;top:1055.1px;color:#000;">170.0</div><div class="tx n" style="right:383.8px;top:1055.1px;color:#000;">$20.10</div>
<svg class="a" style="left:0;top:700px" width="19" height="50" viewBox="0 0 19 50"><rect x="6.1" y="7.0" width="2.5" height="2.6" fill="#676767"/><rect x="9.6" y="7.0" width="2.5" height="2.6" fill="#676767"/><rect x="6.1" y="12.1" width="2.5" height="2.6" fill="#676767"/><rect x="9.6" y="12.1" width="2.5" height="2.6" fill="#676767"/><rect x="6.1" y="17.2" width="2.5" height="2.6" fill="#676767"/><rect x="9.6" y="17.2" width="2.5" height="2.6" fill="#676767"/><rect x="6.1" y="22.3" width="2.5" height="2.6" fill="#676767"/><rect x="9.6" y="22.3" width="2.5" height="2.6" fill="#676767"/><rect x="6.1" y="27.4" width="2.5" height="2.6" fill="#676767"/><rect x="9.6" y="27.4" width="2.5" height="2.6" fill="#676767"/><rect x="6.1" y="32.5" width="2.5" height="2.6" fill="#676767"/><rect x="9.6" y="32.5" width="2.5" height="2.6" fill="#676767"/><rect x="6.1" y="37.6" width="2.5" height="2.6" fill="#676767"/><rect x="9.6" y="37.6" width="2.5" height="2.6" fill="#676767"/><rect x="6.1" y="42.7" width="2.5" height="2.6" fill="#676767"/><rect x="9.6" y="42.7" width="2.5" height="2.6" fill="#676767"/></svg>
<div class="a" style="left:0;top:1044px;width:100px;height:36px;background:#df6600;border-top-right-radius:10px;box-shadow:0 0 28px rgba(0,0,0,0.2)"><span style="position:absolute;left:30px;top:9px;font-size:17.5px;color:#fff;line-height:20px">Docs</span></div>
<div class="a" id="scroll"><div class="a" style="left:1px;top:21px;width:17px;height:789px;background:#c1c1c1"></div><svg class="a" style="left:4px;top:8px" width="11" height="7"><path d="M0.5,6.5 L5.5,1 L10.5,6.5 Z" fill="#a3a3a3"/></svg><svg class="a" style="left:4px;top:1065px" width="11" height="7"><path d="M0.5,0.5 L5.5,6 L10.5,0.5 Z" fill="#505050"/></svg></div>
</body></html>
